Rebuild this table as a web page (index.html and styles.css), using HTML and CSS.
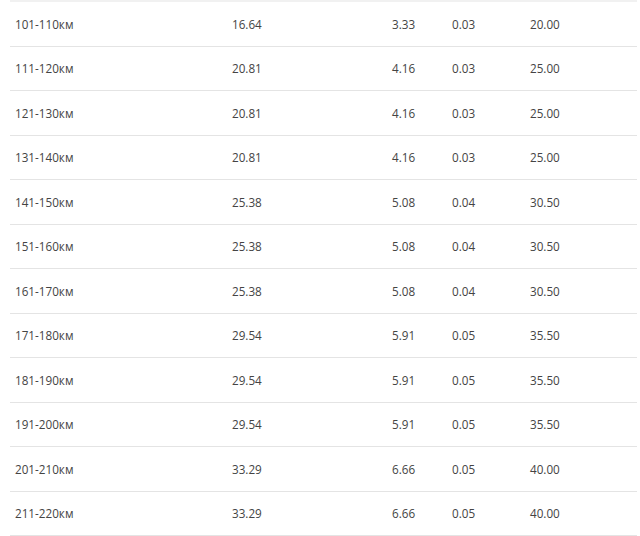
FILE: index.html
```html
<!DOCTYPE html>
<html lang="ru">
<head>
<meta charset="utf-8">
<link rel="stylesheet" href="styles.css">
</head>
<body>
<div class="tbl">
  <div class="row"><span class="c1">101-110км</span><span class="c2">16.64</span><span class="c3">3.33</span><span class="c4">0.03</span><span class="c5">20.00</span></div>
  <div class="row"><span class="c1">111-120км</span><span class="c2">20.81</span><span class="c3">4.16</span><span class="c4">0.03</span><span class="c5">25.00</span></div>
  <div class="row"><span class="c1">121-130км</span><span class="c2">20.81</span><span class="c3">4.16</span><span class="c4">0.03</span><span class="c5">25.00</span></div>
  <div class="row"><span class="c1">131-140км</span><span class="c2">20.81</span><span class="c3">4.16</span><span class="c4">0.03</span><span class="c5">25.00</span></div>
  <div class="row"><span class="c1">141-150км</span><span class="c2">25.38</span><span class="c3">5.08</span><span class="c4">0.04</span><span class="c5">30.50</span></div>
  <div class="row"><span class="c1">151-160км</span><span class="c2">25.38</span><span class="c3">5.08</span><span class="c4">0.04</span><span class="c5">30.50</span></div>
  <div class="row"><span class="c1">161-170км</span><span class="c2">25.38</span><span class="c3">5.08</span><span class="c4">0.04</span><span class="c5">30.50</span></div>
  <div class="row"><span class="c1">171-180км</span><span class="c2">29.54</span><span class="c3">5.91</span><span class="c4">0.05</span><span class="c5">35.50</span></div>
  <div class="row"><span class="c1">181-190км</span><span class="c2">29.54</span><span class="c3">5.91</span><span class="c4">0.05</span><span class="c5">35.50</span></div>
  <div class="row"><span class="c1">191-200км</span><span class="c2">29.54</span><span class="c3">5.91</span><span class="c4">0.05</span><span class="c5">35.50</span></div>
  <div class="row"><span class="c1">201-210км</span><span class="c2">33.29</span><span class="c3">6.66</span><span class="c4">0.05</span><span class="c5">40.00</span></div>
  <div class="row"><span class="c1">211-220км</span><span class="c2">33.29</span><span class="c3">6.66</span><span class="c4">0.05</span><span class="c5">40.00</span></div>
</div>
</body>
</html>
```

FILE: styles.css
```css
html, body {
  margin: 0;
  padding: 0;
  background: #ffffff;
}
body {
  padding: 0 3px 0 10px;
  font-family: "Open Sans", "Noto Sans", sans-serif;
  font-size: 11.7px;
  color: #444444;
}
.tbl {
  border-top: 2px solid #f1f1f1;
}
.row {
  display: grid;
  grid-template-columns: 217px 160px 60px 78px 1fr;
  align-items: center;
  height: 44.5px;
  box-sizing: border-box;
  border-bottom: 1px solid #e4e4e4;
}
.row span {
  padding-left: 5px;
  white-space: nowrap;
}
```
